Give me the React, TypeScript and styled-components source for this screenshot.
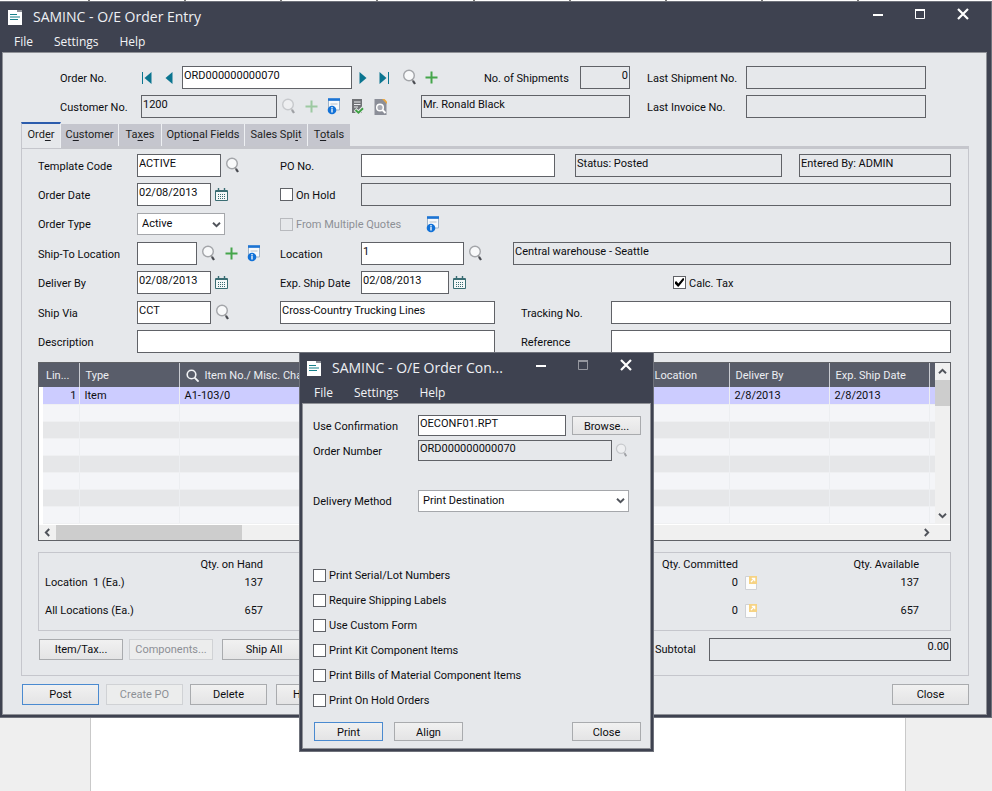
import React, { useState } from "react";
import styled, { createGlobalStyle, css } from "styled-components";

const UI = `Roboto, "Liberation Sans", sans-serif`;
const SEGOE = `"Open Sans", "Noto Sans", sans-serif`;
const color = {
  frame: "#3e4250",
  face: "#e6e8eb",
  line: "#c5c6cc",
  edge: "#606267",
  text: "#0c0d10",
  faded: "#8d9096",
};

const GlobalStyle = createGlobalStyle`
  *, *::before, *::after { box-sizing: border-box; }
  body { margin: 0; background: #efefef; color: ${color.text}; font: 11px/16px ${UI}; }
  input, select, button { font: inherit; color: inherit; border-radius: 0; margin: 0; }
`;

/* ---------- shell ---------- */

const Page = styled.div`
  position: relative;
  display: flex;
  flex-direction: column;
  min-height: 100vh;
  overflow: hidden;
`;
const Ruler = styled.div`
  display: grid;
  grid-template-columns: 90px repeat(8, 1fr) 133px;
  height: 1px;
  background: #fff;
`;
const RulerMark = styled.span`
  border-right: 2px solid #777;
`;
const Desk = styled.div`
  flex: 1;
  display: flex;
  padding: 0 86px 0 90px;
  background: #efefef;
`;
const Sheet = styled.div`
  flex: 1;
  background: #fff;
  border: solid #c9c9c9;
  border-width: 0 1px;
`;

const Window = styled.section`
  background: ${color.frame};
  border: solid #6f727b;
  border-width: 1px 1px 1px 0;
  padding: 0 4px 2px 2px;
`;
const Dialog = styled(Window)`
  position: absolute;
  left: 299px;
  top: 352px;
  width: 355px;
  border-left-width: 1px;
  padding: 0 2px 2px 2px;
`;
const TitleBar = styled.header<{ $tight?: boolean }>`
  display: flex;
  align-items: center;
  height: 30px;
  padding: ${(p) => (p.$tight ? "0 19px 0 5px" : "0 18px 0 6px")};
`;
const Title = styled.h1`
  flex: 1;
  margin: 0 0 0 11px;
  color: #eef0f4;
  font: 400 14px/20px ${SEGOE};
  white-space: nowrap;
`;
const Controls = styled.div`
  display: flex;
  align-items: center;
  gap: 32px;
  padding-bottom: 6px;
`;
const BareButton = styled.button<{ $dim?: boolean }>`
  display: inline-flex;
  align-items: center;
  justify-content: center;
  flex: none;
  padding: 0;
  border: 0;
  background: none;
  opacity: ${(p) => (p.$dim ? 0.45 : 1)};
`;
const MenuBar = styled.nav`
  display: flex;
  height: 20px;
  padding-left: 12px;
  gap: 21px;
  color: #f3f4f6;
  font: 12px/20px ${SEGOE};
`;
const MenuItem = styled.button`
  padding: 0;
  border: 0;
  background: none;
`;
const Face = styled.div`
  background: ${color.face};
  border: 1px solid #8f9197;
`;
const MainFace = styled(Face)`
  padding: 13px 17px 9px 18px;
`;

/* ---------- form parts ---------- */

const Row = styled.div<{ $h?: number; $low?: boolean }>`
  display: flex;
  align-items: ${(p) => (p.$low ? "flex-end" : "center")};
  height: ${(p) => p.$h ?? 23}px;
`;
const Stack = styled.div`
  display: flex;
  flex-direction: column;
  gap: 6px;
`;
const Cell = styled.div<{ $w?: number; $gap?: number }>`
  display: flex;
  align-items: center;
  gap: ${(p) => p.$gap ?? 4}px;
  flex: ${(p) => (p.$w ? `0 0 ${p.$w}px` : "1 1 0")};
  min-width: 0;
`;
const Label = styled.label<{ $w?: number }>`
  flex: 0 0 ${(p) => (p.$w ? `${p.$w}px` : "auto")};
  min-width: 0;
  padding-top: 2px;
  white-space: nowrap;
`;
const Field = styled.input<{ $w?: number; $short?: boolean }>`
  flex: ${(p) => (p.$w ? `0 0 ${p.$w}px` : "1 1 0")};
  width: ${(p) => (p.$w ? `${p.$w}px` : "auto")};
  min-width: 0;
  height: ${(p) => (p.$short ? 21 : 23)}px;
  padding: 0 2px 5px 1px;
  border: 1px solid ${color.edge};
  background: #fff;
  outline: none;
  &[readonly] { background: ${color.face}; }
  &[data-align="end"] { text-align: right; padding-right: 1px; }
`;
const Space = styled.span<{ $w: number }>`
  flex: 0 0 ${(p) => p.$w}px;
`;
const SelectBox = styled.div<{ $w: number }>`
  display: grid;
  flex: 0 0 ${(p) => p.$w}px;
  align-items: center;
  > * { grid-area: 1 / 1; }
  > svg { justify-self: end; margin-right: 4px; pointer-events: none; }
`;
const Select = styled.select`
  appearance: none;
  height: 22px;
  padding: 0 18px 0 4px;
  border: 1px solid #a5a7ab;
  background: #fff;
  outline: none;
`;
const CheckLabel = styled.label<{ $w?: number }>`
  display: flex;
  align-items: center;
  gap: 3px;
  flex: 0 0 ${(p) => (p.$w ? `${p.$w}px` : "auto")};
  white-space: nowrap;
  &:has(:disabled) { color: ${color.faded}; }
`;
const CheckText = styled.span`
  height: 16px;
  line-height: 18px;
`;
const CheckInput = styled.input`
  appearance: none;
  display: grid;
  place-items: center;
  flex: none;
  width: 13px;
  height: 13px;
  border: 1px solid ${color.edge};
  background: #fff;
  &:disabled { border-color: #b8babe; background: ${color.face}; }
  &:checked::after {
    content: "";
    width: 9px;
    height: 9px;
    background: #000;
    clip-path: polygon(0 45%, 12% 34%, 38% 60%, 86% 4%, 100% 4%, 100% 22%, 40% 96%, 32% 96%, 0 64%);
  }
`;
const Button = styled.button<{ $w: number; $main?: boolean; $h?: number }>`
  flex: 0 0 ${(p) => p.$w}px;
  height: ${(p) => p.$h ?? 21}px;
  padding: 2px 0 0;
  border: 1px solid ${(p) => (p.$main ? "#4a8ad0" : "#a9abae")};
  background: linear-gradient(#f1f1f1, #e4e4e5);
  &:disabled { color: ${color.faded}; border-color: #d0d2d5; background: #eceded; }
`;

/* ---------- tabs ---------- */

const Tabs = styled.div`
  display: flex;
  align-items: flex-end;
  height: 24px;
  margin-top: 4px;
`;
const Tab = styled.button<{ $w: number; $on?: boolean }>`
  flex: 0 0 ${(p) => p.$w}px;
  height: 22px;
  padding: 0;
  border: 0;
  border-right: 1px solid #eef0f3;
  background: #c5c6ce;
  color: #1c1d22;
  white-space: nowrap;
  &:last-child { border-right: 0; }
  u { text-underline-offset: 2px; }
  ${(p) =>
    p.$on &&
    css`
      height: 26px;
      border-top: 2px solid #2c5cac;
      border-left: 1px solid ${color.line};
      background: ${color.face};
      margin-bottom: -3px;
      padding-bottom: 2px;
      align-self: flex-start;
    `}
`;
const Panel = styled.div`
  border: 1px solid ${color.line};
  border-top: 3px solid ${color.line};
  padding: 5px 17px 14px 16px;
`;

/* ---------- line grid ---------- */

const GridFrame = styled.div`
  display: grid;
  grid-template-columns: minmax(0, 1fr) 15px;
  margin-top: 9px;
  border: 1px solid ${color.edge};
  background: #fff;
`;
const Lines = styled.table`
  width: 100%;
  height: 160px;
  border-collapse: collapse;
  table-layout: fixed;
`;
const HeadCell = styled.th`
  height: 24px;
  padding: 1px 6px 0;
  overflow: hidden;
  background: #595d6a;
  border-right: 1px solid #c9cbd1;
  color: #eceef2;
  font-weight: 400;
  text-align: left;
  white-space: nowrap;
  svg { vertical-align: -3px; margin-right: 6px; }
  &:first-child, &:last-child { border-right: 0; padding: 0; }
  &:nth-child(2) { padding: 1px 3px 0; }
`;
const LineRow = styled.tr<{ $tone: string }>`
  background: ${(p) => p.$tone};
`;
const LineCell = styled.td<{ $end?: boolean }>`
  height: 17px;
  padding: 2px 5px 0;
  line-height: 14px;
  border-right: 1px solid #eceef1;
  border-bottom: 1px solid #eff0f2;
  text-align: ${(p) => (p.$end ? "right" : "left")};
  ${(p) => p.$end && "padding-right: 2px;"}
  &:first-child { background: #fff; border: 0; padding: 0; }
  &:last-child { border-right: 0; padding: 0; }
`;
const VBar = styled.div`
  display: flex;
  flex-direction: column;
  align-items: center;
  justify-content: space-between;
  background: #f0f0f0;
  padding-bottom: 4px;
`;
const VHead = styled.div`
  display: flex;
  flex-direction: column;
  align-items: center;
  width: 100%;
`;
const ArrowSlot = styled.span`
  display: flex;
  align-items: center;
  justify-content: center;
  width: 17px;
  height: 17px;
`;
const Thumb = styled.span<{ $w?: number; $h: number }>`
  width: ${(p) => (p.$w ? `${p.$w}px` : "100%")};
  height: ${(p) => p.$h}px;
  background: #cdcdcd;
`;
const HBar = styled.div`
  grid-column: 1 / -1;
  display: flex;
  align-items: center;
  height: 15px;
  margin-top: 1px;
  padding-right: 15px;
  background: #f0f0f0;
`;
const Grow = styled.span`
  flex: 1;
`;

/* ---------- quantities ---------- */

const QtyFrame = styled.div`
  margin-top: 11px;
  padding: 4px 6px 0;
  border: 1px solid ${color.line};
`;
const QtyTable = styled.table`
  width: 100%;
  border-collapse: collapse;
  table-layout: fixed;
  th, td { padding: 0; font-weight: 400; text-align: right; white-space: nowrap; }
  th[scope="row"] { text-align: left; }
  tr:first-child { height: 16px; }
  tr:nth-child(2) { height: 20px; }
  tr:nth-child(3) { height: 37px; }
`;
const IconCell = styled.td`
  && { text-align: left; padding-left: 7px; }
  svg { display: block; }
`;

/* ---------- dialog ---------- */

const DialogBody = styled(Face)`
  padding: 11px 9px 7px 10px;
`;
const Options = styled.div`
  display: flex;
  flex-direction: column;
  gap: 9px;
  margin: 31px 0 14px;
`;
const Pre = styled.span`
  white-space: pre;
`;

/* ---------- icons ---------- */

const DocIcon = () => (
  <svg width="14" height="15" viewBox="0 0 14 15">
    <path d="M0 0h9v2h5v13H0z" fill="#fff" />
    <path d="M9 0h5v2H9z" fill="#8b8e96" />
    <path d="M2 4.500h7M2 7h10M2 9.500h8" stroke="#16808a" strokeWidth="1.1" />
  </svg>
);
const MinIcon = () => (
  <svg width="10" height="12" viewBox="0 0 10 12"><path d="M0 7h10" stroke="#fff" strokeWidth="2" /></svg>
);
const MaxIcon = () => (
  <svg width="10" height="10" viewBox="0 0 10 10">
    <path d="M.5 1v8.500h9V1" fill="none" stroke="#fff" /><path d="M0 1h10" stroke="#fff" strokeWidth="2" />
  </svg>
);
const CloseIcon = () => (
  <svg width="12" height="12" viewBox="0 0 12 12"><path d="M1 1l10 10M11 1L1 11" stroke="#fff" strokeWidth="2.200" /></svg>
);
const Magnifier = ({ size = 15 }: { size?: number }) => (
  <svg width={size} height={size + 2} viewBox="0 0 15 17">
    <circle cx="7" cy="6.500" r="5.300" fill="#f8f9fa" stroke="#a3a5a9" strokeWidth="1.400" />
    <path d="M10 10.500l1.200 1.500" stroke="#888" strokeWidth="1.200" />
    <path d="M11 11.800l2 3.200" stroke="#4a4c52" strokeWidth="2.200" />
  </svg>
);
const Plus = () => (
  <svg width="13" height="13" viewBox="0 0 13 13"><path d="M6.500 .5v12M.5 6.500h12" stroke="#45a54b" strokeWidth="2" /></svg>
);
const FirstIcon = () => (
  <svg width="11" height="12" viewBox="0 0 11 12"><path d="M1.500 0v12" stroke="#0b7590" /><path d="M10.500 0v12L3.500 6z" fill="#0b7590" /></svg>
);
const PrevIcon = () => (
  <svg width="8" height="12" viewBox="0 0 8 12"><path d="M7.500 0v12L.5 6z" fill="#0b7590" /></svg>
);
const NextIcon = () => (
  <svg width="8" height="12" viewBox="0 0 8 12"><path d="M.5 0v12l7-6z" fill="#0b7590" /></svg>
);
const LastIcon = () => (
  <svg width="11" height="12" viewBox="0 0 11 12"><path d="M9.500 0v12" stroke="#0b7590" /><path d="M.5 0v12l7-6z" fill="#0b7590" /></svg>
);
const InfoIcon = () => (
  <svg width="14" height="17" viewBox="0 0 14 17">
    <path d="M1.500 2h11v10h-11z" fill="#f6f9fc" stroke="#9fb3c8" />
    <path d="M1 1.500h12" stroke="#1c74d4" strokeWidth="2.600" />
    <path d="M3.500 6h7" stroke="#b6c0ca" />
    <circle cx="5" cy="12" r="4.300" fill="#1272d8" />
    <path d="M5 10.800v3.600M5 9v1.200" stroke="#fff" strokeWidth="1.300" />
  </svg>
);
const CheckDocIcon = () => (
  <svg width="13" height="17" viewBox="0 0 13 17">
    <path d="M1 1h10v14H1z" fill="#707276" />
    <path d="M3 4h6.500M3 6.500h6.500M3 9h4" stroke="#eceef0" strokeWidth="1.100" />
    <path d="M4 11.500l3.500 3.200 5-5" fill="none" stroke="#e6e8eb" strokeWidth="4" />
    <path d="M4.500 12l3 2.700 4.500-4.400" fill="none" stroke="#3fa044" strokeWidth="1.900" />
  </svg>
);
const FindDocIcon = () => (
  <svg width="13" height="16" viewBox="0 0 13 16">
    <path d="M.5 0H9l3.500 4v12H.5z" fill="#8b8e98" />
    <path d="M8 0l5 5V2.500L10.500 0z" fill="#eba63c" />
    <circle cx="6" cy="8.500" r="3.300" fill="#a9abb3" stroke="#fff" strokeWidth="1.500" />
    <path d="M8.500 11l3 3" stroke="#fff" strokeWidth="1.900" />
  </svg>
);
const CalendarIcon = () => (
  <svg width="13" height="13" viewBox="0 0 13 13">
    <path d="M.5 2.500h12v10H.5z" fill="#f4f8f8" stroke="#3a6d73" />
    <path d="M1 3.500h11" stroke="#3a6d73" />
    <path d="M3.500 0v3M9.500 0v3" stroke="#3a6d73" strokeWidth="1.400" />
    <path d="M3 6.500h8M3 8.500h8M3 10.500h8" stroke="#3a6d73" strokeDasharray="1 1" />
  </svg>
);
const Chevron = ({ turn = 0 }: { turn?: number }) => (
  <svg width="9" height="9" viewBox="0 0 9 9">
    <path d="M1 2.800l3.500 3.400L8 2.800" transform={`rotate(${turn} 4.500 4.500)`} fill="none" stroke="#50535a" strokeWidth="1.900" />
  </svg>
);
const HeadSearch = () => (
  <svg width="13" height="13" viewBox="0 0 13 13">
    <circle cx="5.500" cy="5.500" r="4.300" fill="none" stroke="#f2f3f5" strokeWidth="1.600" /><path d="M8.600 8.600l4 4" stroke="#f2f3f5" strokeWidth="1.900" />
  </svg>
);
const DrillIcon = () => (
  <svg width="12" height="14" viewBox="0 0 12 14">
    <path d="M.5 .5h11v13H.5z" fill="#fdfdfc" stroke="#cfd1d5" />
    <path d="M4 0h8v8H4z" fill="#f6d384" />
    <path d="M6 6l3.500-3.500M6.800 2.300h2.900v2.900" stroke="#fff" strokeWidth="1.200" fill="none" />
  </svg>
);

/* ---------- composites ---------- */

const IconButton = ({ name, dim, children }: { name: string; dim?: boolean; children: React.ReactNode }) => (
  <BareButton type="button" aria-label={name} $dim={dim} disabled={dim}>{children}</BareButton>
);

const Chrome = ({ title, tight }: { title: string; tight?: boolean }) => (
  <>
    <TitleBar $tight={tight}>
      <DocIcon />
      <Title>{title}</Title>
      <Controls>
        <IconButton name="Minimize"><MinIcon /></IconButton>
        <IconButton name="Maximize" dim={tight}><MaxIcon /></IconButton>
        <IconButton name="Close window"><CloseIcon /></IconButton>
      </Controls>
    </TitleBar>
    <MenuBar>
      {["File", "Settings", "Help"].map((m) => <MenuItem type="button" key={m}>{m}</MenuItem>)}
    </MenuBar>
  </>
);

const Check = ({ text, w, on, off }: { text: string; w?: number; on?: boolean; off?: boolean }) => (
  <CheckLabel $w={w}>
    <CheckInput type="checkbox" defaultChecked={on} disabled={off} />
    <CheckText>{text}</CheckText>
  </CheckLabel>
);

const tabs: [string, string, string, number][] = [
  ["Ord", "e", "r", 40],
  ["C", "u", "stomer", 58],
  ["Ta", "x", "es", 43],
  ["Optio", "n", "al Fields", 83],
  ["Sales Spl", "i", "t", 63],
  ["T", "o", "tals", 42],
];

const tones = ["#ccccff", "#f4f5f8", "#e6e7e9", "#f4f5f8", "#e6e7e9", "#f4f5f8", "#e6e7e9", "#f4f5f8"];
const firstLine = ["", "1", "Item", "A1-103/0", "", "2/8/2013", "2/8/2013", ""];

const OrderLines = () => (
  <GridFrame>
    <Lines>
      <colgroup>
        {[4, 36, 100, 0, 100, 100, 100, 6].map((w, i) => <col key={i} width={w || undefined} />)}
      </colgroup>
      <thead>
        <tr>
          <HeadCell />
          <HeadCell>Lin...</HeadCell>
          <HeadCell>Type</HeadCell>
          <HeadCell><HeadSearch />Item No./ Misc. Charge</HeadCell>
          <HeadCell><HeadSearch />Location</HeadCell>
          <HeadCell>Deliver By</HeadCell>
          <HeadCell>Exp. Ship Date</HeadCell>
          <HeadCell />
        </tr>
      </thead>
      <tbody>
        {tones.map((tone, r) => (
          <LineRow key={r} $tone={tone}>
            {firstLine.map((t, c) => <LineCell key={c} $end={c === 1}>{r === 0 ? t : ""}</LineCell>)}
          </LineRow>
        ))}
      </tbody>
    </Lines>
    <VBar>
      <VHead>
        <ArrowSlot><Chevron turn={180} /></ArrowSlot>
        <Thumb $h={26} />
      </VHead>
      <Chevron />
    </VBar>
    <HBar>
      <ArrowSlot><Chevron turn={90} /></ArrowSlot>
      <Thumb $w={186} $h={15} />
      <Grow />
      <ArrowSlot><Chevron turn={-90} /></ArrowSlot>
    </HBar>
  </GridFrame>
);

const Quantities = () => (
  <QtyFrame>
    <QtyTable>
      <colgroup>
        {[118, 100, 91, 0, 100, 80, 101, 25].map((w, i) => <col key={i} width={w || undefined} />)}
      </colgroup>
      <tbody>
        <tr>
          <td /><th scope="col">Qty. on Hand</th><th scope="col">Qty. on SO</th><td />
          <th scope="col">Qty. Committed</th><td /><th scope="col">Qty. Available</th><td />
        </tr>
        <tr>
          <th scope="row"><Pre>{"Location  1 (Ea.)"}</Pre></th><td>137</td><td /><td />
          <td>0</td><IconCell><DrillIcon /></IconCell><td>137</td><td />
        </tr>
        <tr>
          <th scope="row">All Locations (Ea.)</th><td>657</td><td /><td />
          <td>0</td><IconCell><DrillIcon /></IconCell><td>657</td><td />
        </tr>
      </tbody>
    </QtyTable>
  </QtyFrame>
);

const options = [
  "Print Serial/Lot Numbers",
  "Require Shipping Labels",
  "Use Custom Form",
  "Print Kit Component Items",
  "Print Bills of Material Component Items",
  "Print On Hold Orders",
];

const ConfirmationDialog = () => (
  <Dialog role="dialog" aria-label="O/E Order Confirmations">
    <Chrome title="SAMINC - O/E Order Con..." tight />
    <DialogBody>
      <Row $h={21}>
        <Label htmlFor="conf" $w={105}>Use Confirmation</Label>
        <Field id="conf" $w={148} $short defaultValue="OECONF01.RPT" />
        <Space $w={6} />
        <Button type="button" $w={69} $h={19}>Browse...</Button>
      </Row>
      <Row $h={29}>
        <Label htmlFor="ordnum" $w={105}>Order Number</Label>
        <Field id="ordnum" $w={194} $short readOnly defaultValue="ORD000000000070" />
        <Space $w={3} />
        <IconButton name="Find order number" dim><Magnifier size={13} /></IconButton>
      </Row>
      <Row $h={71}>
        <Label htmlFor="method" $w={105}>Delivery Method</Label>
        <SelectBox $w={211}>
          <Select id="method"><option>Print Destination</option></Select>
          <Chevron />
        </SelectBox>
      </Row>
      <Options>
        {options.map((t) => <Check key={t} text={t} />)}
      </Options>
      <Row $h={19}>
        <Space $w={1} />
        <Button type="button" $w={69} $h={19} $main>Print</Button>
        <Space $w={11} />
        <Button type="button" $w={69} $h={19}>Align</Button>
        <Grow />
        <Button type="button" $w={69} $h={19}>Close</Button>
      </Row>
    </DialogBody>
  </Dialog>
);

const BottomRow = styled(Row)`
  margin-top: 7px;
`;
const Footer = styled(Row)`
  height: 21px;
  margin-top: 8px;
`;

export default function App() {
  const [tab, setTab] = useState(0);
  return (
    <Page>
      <GlobalStyle />
      <Ruler>{Array.from({ length: 9 }, (_, i) => <RulerMark key={i} />)}</Ruler>
      <Window>
        <Chrome title="SAMINC - O/E Order Entry" />
        <MainFace>
          <Stack>
            <Row>
              <Space $w={39} />
              <Label htmlFor="order" $w={81}>Order No.</Label>
              <Cell $w={41} $gap={13}>
                <IconButton name="First order"><FirstIcon /></IconButton>
                <IconButton name="Previous order"><PrevIcon /></IconButton>
              </Cell>
              <Field id="order" $w={170} defaultValue="ORD000000000070" />
              <Space $w={7} />
              <Cell $w={125} $gap={12}>
                <IconButton name="Next order"><NextIcon /></IconButton>
                <IconButton name="Last order"><LastIcon /></IconButton>
                <Cell $gap={8}>
                  <IconButton name="Find order"><Magnifier /></IconButton>
                  <IconButton name="New order"><Plus /></IconButton>
                </Cell>
              </Cell>
              <Label htmlFor="ships" $w={96}>No. of Shipments</Label>
              <Field id="ships" $w={50} readOnly data-align="end" defaultValue="0" />
              <Space $w={17} />
              <Label htmlFor="lastship" $w={99}>Last Shipment No.</Label>
              <Field id="lastship" readOnly />
              <Space $w={43} />
            </Row>
            <Row>
              <Space $w={39} />
              <Label htmlFor="customer" $w={81}>Customer No.</Label>
              <Field id="customer" $w={136} readOnly defaultValue="1200" />
              <Space $w={4} />
              <Cell $w={140} $gap={9}>
                <IconButton name="Find customer" dim><Magnifier /></IconButton>
                <IconButton name="New customer" dim><Plus /></IconButton>
                <Cell $gap={10}>
                  <IconButton name="Customer information"><InfoIcon /></IconButton>
                  <IconButton name="Credit check"><CheckDocIcon /></IconButton>
                  <IconButton name="Customer inquiry"><FindDocIcon /></IconButton>
                </Cell>
              </Cell>
              <Field aria-label="Customer name" $w={209} readOnly defaultValue="Mr. Ronald Black" />
              <Space $w={17} />
              <Label htmlFor="lastinv" $w={99}>Last Invoice No.</Label>
              <Field id="lastinv" readOnly />
              <Space $w={43} />
            </Row>
          </Stack>

          <Tabs role="tablist">
            {tabs.map(([a, u, b, w], i) => (
              <Tab type="button" role="tab" aria-selected={tab === i} key={i} $w={w} $on={tab === i} onClick={() => setTab(i)}>
                {a}<u>{u}</u>{b}
              </Tab>
            ))}
          </Tabs>

          <Panel>
            <Stack>
              <Row>
                <Label htmlFor="template" $w={99}>Template Code</Label>
                <Cell $w={143}>
                  <Field id="template" $w={84} defaultValue="ACTIVE" />
                  <IconButton name="Find template"><Magnifier /></IconButton>
                </Cell>
                <Label htmlFor="po" $w={81}>PO No.</Label>
                <Field id="po" $w={194} />
                <Space $w={20} />
                <Field aria-label="Status" $w={207} readOnly defaultValue="Status: Posted" />
                <Space $w={17} />
                <Field aria-label="Entered by" readOnly defaultValue="Entered By: ADMIN" />
              </Row>
              <Row>
                <Label htmlFor="odate" $w={99}>Order Date</Label>
                <Cell $w={143}>
                  <Field id="odate" $w={74} defaultValue="02/08/2013" />
                  <IconButton name="Pick order date"><CalendarIcon /></IconButton>
                </Cell>
                <Check text="On Hold" w={81} />
                <Field aria-label="Hold reason" readOnly />
              </Row>
              <Row $h={24}>
                <Label htmlFor="otype" $w={99}>Order Type</Label>
                <Cell $w={143}>
                  <SelectBox $w={88}>
                    <Select id="otype"><option>Active</option></Select>
                    <Chevron />
                  </SelectBox>
                </Cell>
                <Check text="From Multiple Quotes" w={146} off />
                <IconButton name="Quote information"><InfoIcon /></IconButton>
              </Row>
              <Row>
                <Label htmlFor="shipto" $w={99}>Ship-To Location</Label>
                <Cell $w={143}>
                  <Field id="shipto" $w={60} />
                  <Cell $gap={9}>
                    <IconButton name="Find ship-to"><Magnifier /></IconButton>
                    <IconButton name="New ship-to"><Plus /></IconButton>
                    <IconButton name="Ship-to information"><InfoIcon /></IconButton>
                  </Cell>
                </Cell>
                <Label htmlFor="location" $w={81}>Location</Label>
                <Cell $w={152}>
                  <Field id="location" $w={103} defaultValue="1" />
                  <IconButton name="Find location"><Magnifier /></IconButton>
                </Cell>
                <Field aria-label="Location name" readOnly defaultValue="Central warehouse - Seattle" />
              </Row>
              <Row>
                <Label htmlFor="deliver" $w={99}>Deliver By</Label>
                <Cell $w={143}>
                  <Field id="deliver" $w={74} defaultValue="02/08/2013" />
                  <IconButton name="Pick delivery date"><CalendarIcon /></IconButton>
                </Cell>
                <Label htmlFor="expship" $w={81}>Exp. Ship Date</Label>
                <Cell $w={312}>
                  <Field id="expship" $w={88} defaultValue="02/08/2013" />
                  <IconButton name="Pick ship date"><CalendarIcon /></IconButton>
                </Cell>
                <Check text="Calc. Tax" on />
              </Row>
              <Row $h={24} $low>
                <Cell $w={242}>
                  <Label htmlFor="via" $w={95}>Ship Via</Label>
                  <Field id="via" $w={74} defaultValue="CCT" />
                  <IconButton name="Find carrier"><Magnifier /></IconButton>
                </Cell>
                <Field aria-label="Carrier name" $w={215} defaultValue="Cross-Country Trucking Lines" />
                <Space $w={26} />
                <Cell $gap={0}>
                  <Label htmlFor="track" $w={90}>Tracking No.</Label>
                  <Field id="track" />
                </Cell>
              </Row>
              <Row>
                <Label htmlFor="desc" $w={99}>Description</Label>
                <Field id="desc" $w={358} />
                <Space $w={26} />
                <Label htmlFor="ref" $w={90}>Reference</Label>
                <Field id="ref" />
              </Row>
            </Stack>

            <OrderLines />
            <Quantities />

            <BottomRow>
              <Space $w={1} />
              <Button type="button" $w={84}>Item/Tax...</Button>
              <Space $w={6} />
              <Button type="button" $w={84} disabled>Components...</Button>
              <Space $w={9} />
              <Button type="button" $w={84}>Ship All</Button>
              <Grow />
              <Label htmlFor="subtotal" $w={54}>Subtotal</Label>
              <Field id="subtotal" $w={242} readOnly data-align="end" defaultValue="0.00" />
            </BottomRow>
          </Panel>

          <Footer>
            <Space $w={1} />
            <Button type="button" $w={77} $main>Post</Button>
            <Space $w={7} />
            <Button type="button" $w={77} disabled>Create PO</Button>
            <Space $w={7} />
            <Button type="button" $w={77}>Delete</Button>
            <Space $w={9} />
            <Button type="button" $w={77}>History...</Button>
            <Grow />
            <Button type="button" $w={77}>Close</Button>
          </Footer>
        </MainFace>
      </Window>
      <Desk><Sheet /></Desk>
      <ConfirmationDialog />
    </Page>
  );
}
